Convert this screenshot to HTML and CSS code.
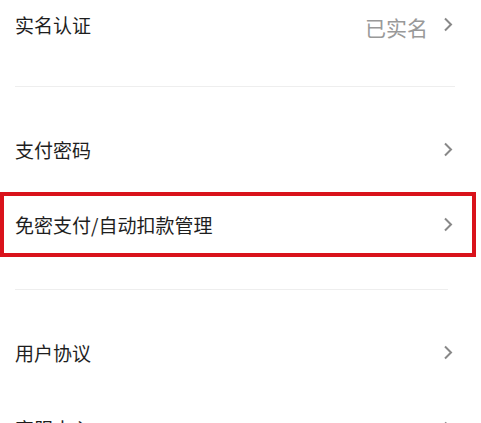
FILE: index.html
```html
<!DOCTYPE html>
<html lang="zh-CN">
<head>
    <meta charset="UTF-8">
    <meta name="viewport" content="width=device-width, initial-scale=1.0">
    <title>账户设置</title>
    <link rel="stylesheet" href="styles.css">
</head>
<body>
    <div class="menu">
        <div class="row">
            <span class="label">实名认证</span>
            <span class="extra">
                <span class="value">已实名</span>
                <svg class="arrow" viewBox="0 0 10 15" width="10" height="15"><polyline points="2,1.5 8,7.5 2,13.5"/></svg>
            </span>
        </div>

        <div class="sep"></div>

        <div class="row">
            <span class="label">支付密码</span>
            <svg class="arrow" viewBox="0 0 10 15" width="10" height="15"><polyline points="2,1.5 8,7.5 2,13.5"/></svg>
        </div>

        <div class="row highlight">
            <span class="label">免密支付/自动扣款管理</span>
            <svg class="arrow" viewBox="0 0 10 15" width="10" height="15"><polyline points="2,1.5 8,7.5 2,13.5"/></svg>
        </div>

        <div class="sep sep-low"></div>

        <div class="row">
            <span class="label">用户协议</span>
            <svg class="arrow" viewBox="0 0 10 15" width="10" height="15"><polyline points="2,1.5 8,7.5 2,13.5"/></svg>
        </div>

        <div class="row">
            <span class="label">客服中心</span>
            <svg class="arrow" viewBox="0 0 10 15" width="10" height="15"><polyline points="2,1.5 8,7.5 2,13.5"/></svg>
        </div>
    </div>
</body>
</html>
```

FILE: styles.css
```css
* {
    margin: 0;
    padding: 0;
    box-sizing: border-box;
}

body {
    font-family: "Noto Sans CJK SC", "Noto Sans", sans-serif;
    background: #fff;
    color: #1e1e1e;
    overflow: hidden;
}

.menu {
    margin-top: -14px;
}

.row {
    height: 76px;
    display: flex;
    align-items: center;
    justify-content: space-between;
    padding: 0 28px 0 15px;
}

.label {
    font-size: 19px;
    line-height: 1;
}

.extra {
    display: flex;
    align-items: center;
    gap: 15px;
}

.value {
    font-size: 21px;
    color: #999;
    line-height: 1;
    margin-top: 6px;
}

.arrow {
    display: block;
    fill: none;
    stroke: #888;
    stroke-width: 2;
}

.sep {
    margin: 24px 26px 24px 15px;
    border-top: 1px solid #eee;
}

.highlight {
    height: 65px;
    margin: 5px 5px 0 0;
    border: 4px solid #d9121b;
    padding: 0 19px 0 11px;
}

.sep-low {
    margin-top: 32px;
    margin-right: 33px;
}
```
